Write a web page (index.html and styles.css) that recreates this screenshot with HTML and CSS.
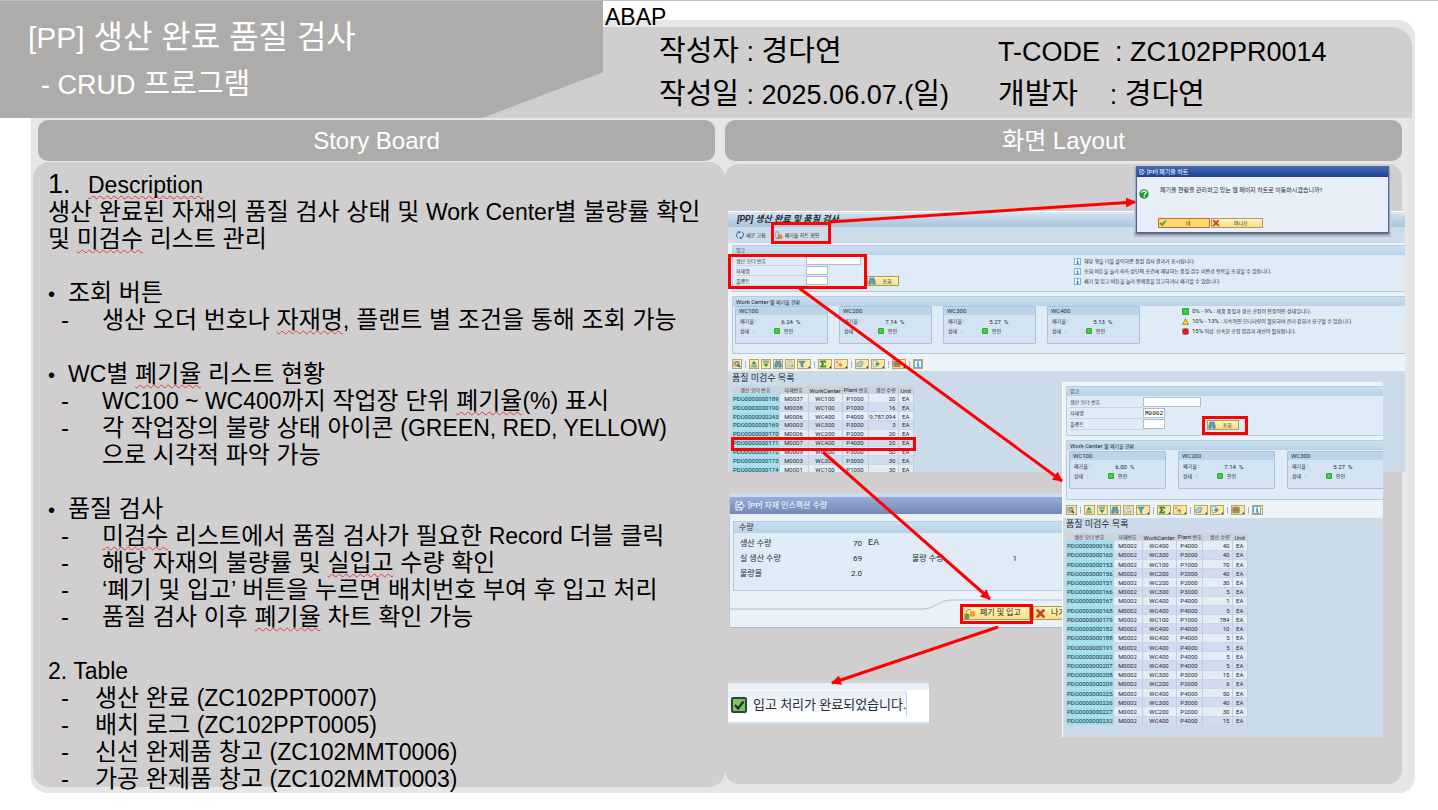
FILE: index.html
```html
<!DOCTYPE html>
<html lang="ko">
<head>
<meta charset="utf-8">
<title>[PP] 생산 완료 품질 검사</title>
<link rel="stylesheet" href="styles.css">
</head>
<body>
<svg class="sprite" aria-hidden="true">
  <symbol id="i-detail" viewBox="0 0 10 10"><path d="M1 2h7v6H1z" fill="#fff" stroke="#777" stroke-width=".7"/><circle cx="4.5" cy="4.5" r="2.3" fill="#b9dba8" stroke="#444" stroke-width=".9"/><path d="M6 6l3 3" stroke="#333" stroke-width="1.3"/></symbol>
  <symbol id="i-asc" viewBox="0 0 10 10"><path d="M5 1l3 4H2z" fill="#3c9a3c"/><path d="M1.5 6h7v1h-7zM1 8h8v1H1z" fill="#2f6f8f"/></symbol>
  <symbol id="i-desc" viewBox="0 0 10 10"><path d="M1 1h8v1H1zM1.500 3h7v1h-7z" fill="#2f6f8f"/><path d="M5 9L2 5h6z" fill="#3c9a3c"/></symbol>
  <symbol id="i-find" viewBox="0 0 10 10"><path d="M2.500 1h1.500l.5 2h1L6 1h1.500L9 6v3H6V6H4v3H1V6z" fill="#5aa0d0" stroke="#28608e" stroke-width=".6"/></symbol>
  <symbol id="i-findn" viewBox="0 0 10 10"><path d="M2.500 1h1.500l.5 2h1L6 1h1.500L8 6v3H5.500V6H4v3H1V6z" fill="#dfe3d5" stroke="#9aa69c" stroke-width=".6"/><path d="M6 7h3M8 5.500L9.500 7 8 8.500" stroke="#999" fill="none" stroke-width=".8"/></symbol>
  <symbol id="i-filter" viewBox="0 0 10 10"><path d="M1 1.500h8L6 5v4L4 8V5z" fill="#5d9fd2" stroke="#2c6496" stroke-width=".7"/></symbol>
  <symbol id="i-sum" viewBox="0 0 10 10"><path d="M1.500 1h7v2.500H7.500L7 2.500H4.500L6.500 5 4.500 7.500H7l.5-1h1V9h-7V8L4 5 1.500 2z" fill="#3d9440" stroke="#266b2b" stroke-width=".4"/></symbol>
  <symbol id="i-sub" viewBox="0 0 10 10"><path d="M1 1h3.500v3.500H1zM5.500 5.500H9V9H5.500z" fill="#e9a27d"/><path d="M2 9l6-7M5 5h3v1H5z" stroke="#d8875f" stroke-width=".8"/></symbol>
  <symbol id="i-print" viewBox="0 0 10 10"><path d="M1 4h6v4H1z" fill="#cfe0ee" stroke="#4777a0" stroke-width=".7"/><circle cx="6" cy="4" r="2.600" fill="#e6f1fa" stroke="#3c77a8" stroke-width=".8"/><path d="M6 2.500V4h1.500" stroke="#36648c" fill="none" stroke-width=".7"/></symbol>
  <symbol id="i-export" viewBox="0 0 10 10"><path d="M1.500 1H6v7H1.500z" fill="#fff" stroke="#4777a0" stroke-width=".7"/><path d="M4 4h3V2.500L9.500 5 7 7.500V6H4z" fill="#58a755" stroke="#2d7440" stroke-width=".4"/></symbol>
  <symbol id="i-grid" viewBox="0 0 10 10"><path d="M1 1.500h8v7H1z" fill="#e9b45e" stroke="#555" stroke-width=".7"/><path d="M1 4h8M1 6h8M3.700 1.500v7M6.400 1.500v7" stroke="#555" stroke-width=".7"/></symbol>
  <symbol id="i-info" viewBox="0 0 10 10"><path d="M.5.5h9v9h-9z" fill="#fff" stroke="#2c8bc4"/><path d="M4.200 1.800h1.800v1.500H4.200zM3.500 4.200H6v3h1v1H3.500v-1h.8v-2h-.8z" fill="#1580c2"/></symbol>
  <symbol id="i-exit" viewBox="0 0 10 10"><path d="M7 3V1H1v8h6V7M3 3.500h3V2l3.500 3L6 8V6.500H3z" fill="none" stroke="#fff" stroke-width=".9"/></symbol>
  <symbol id="i-refresh" viewBox="0 0 10 10"><path d="M5 1H3L.8 4v3L3 9M5 9h2l2.200-3V3L7 1" fill="none" stroke="#32639a" stroke-width="1.200"/><path d="M3 0l3 1.500L3.500 3zM7 10L4 8.500 6.500 7z" fill="#32639a"/></symbol>
  <symbol id="i-chart" viewBox="0 0 10 10"><path d="M1 1h3v8H1z" fill="#d6ebfa" stroke="#3585be" stroke-width=".8"/><path d="M4 5l3-1v5H4z" fill="#4aa34a"/><circle cx="7" cy="6.500" r="2.500" fill="#ef8a2c"/><path d="M2 9h7" stroke="#b33" stroke-width=".8"/></symbol>
  <symbol id="i-move" viewBox="0 0 10 10"><path d="M.8 5.500h3.500v4H.8z" fill="#58a932" stroke="#3a7420" stroke-width=".5"/><path d="M6 3.500h3.300v3.800H6z" fill="#ffb13c" stroke="#e36b12" stroke-width=".7"/><path d="M2 4.500C2 2 4 .8 6 1.800" fill="none" stroke="#555" stroke-width=".7"/></symbol>
  <symbol id="i-no" viewBox="0 0 10 10"><path d="M1 2l1.500-1L5 3.500 7.500 1 9 2 6.500 5 9 8 7.500 9 5 6.500 2.500 9 1 8l2.500-3z" fill="#d9401c" stroke="#a02810" stroke-width=".4"/></symbol>
  <symbol id="i-yes" viewBox="0 0 10 10"><path d="M1 5.500l1.500-1L4 6.200 8 1.500l1 .8L4.200 9z" fill="#4ba32c" stroke="#2f7a1b" stroke-width=".4"/></symbol>
  <symbol id="i-green" viewBox="0 0 10 10"><path d="M1 1h8v8H1z" fill="#1ded1d" stroke="#4d7a4d" stroke-width="1.500"/></symbol>
  <symbol id="i-yellow" viewBox="0 0 10 10"><path d="M5 1l4.300 8H.7z" fill="#ffee00" stroke="#776a22" stroke-width="1"/></symbol>
  <symbol id="i-red" viewBox="0 0 10 10"><path d="M0 0h10v10H0z" fill="#a9b3bb"/><circle cx="5" cy="5" r="4" fill="#ff1010" stroke="#7a2222" stroke-width=".7"/></symbol>
</svg>

<main class="slide">
  <header class="head">
    <div class="banner">
      <h1><span class="en">[PP]</span> 생산 완료 품질 검사</h1>
      <p class="subtitle"><span class="en">- CRUD</span> 프로그램</p>
    </div>
    <p class="tag">ABAP</p>
    <div class="info">
      <p>작성자<span class="en"> : </span>경다연</p>
      <p><span class="en">T-CODE  : ZC102PPR0014</span></p>
      <p>작성일<span class="en"> : 2025.06.07.(</span>일<span class="en">)</span></p>
      <p>개발자   <span class="en"> : </span>경다연</p>
    </div>
  </header>

  <div class="columns">
    <h2 class="bar bar-left">Story Board</h2>
    <h2 class="bar">화면 Layout</h2>

    <section class="story">
      <div class="story-text">
        <h3 class="numbered"><span class="num">1.</span><span class="typo">Description</span></h3>
        <p>생산 완료된 자재의 품질 검사 상태 및 <span class="en">Work Center</span>별 불량률 확인<br>및 <span class="typo">미검수</span> 리스트 관리</p>

        <h4>조회 버튼</h4>
        <ul>
          <li>생산 오더 번호나 <span class="typo">자재명</span>, 플랜트 별 조건을 통해 조회 가능</li>
        </ul>

        <h4><span class="en">WC</span>별 <span class="typo">폐기율</span> 리스트 현황</h4>
        <ul>
          <li><span class="en">WC100 ~ WC400</span>까지 작업장 단위 <span class="typo">폐기율</span><span class="en">(%)</span> 표시</li>
          <li>각 작업장의 불량 상태 아이콘 <span class="en">(GREEN, RED, YELLOW)</span><br>으로 시각적 파악 가능</li>
        </ul>

        <h4>품질 검사</h4>
        <ul>
          <li><span class="typo">미검수</span> 리스트에서 품질 검사가 필요한 <span class="en">Record</span> 더블 클릭</li>
          <li>해당 자재의 불량률 및 <span class="typo">실입고</span> 수량 확인</li>
          <li>‘폐기 및 입고’ 버튼을 누르면 배치번호 부여 후 입고 처리</li>
          <li>품질 검사 이후 <span class="typo">폐기율</span> 차트 확인 가능</li>
        </ul>

        <h3><span class="en">2. Table</span></h3>
        <ul class="tables">
          <li>생산 완료 <span class="en">(ZC102PPT0007)</span></li>
          <li>배치 로그 <span class="en">(ZC102PPT0005)</span></li>
          <li>신선 완제품 창고 <span class="en">(ZC102MMT0006)</span></li>
          <li>가공 완제품 창고 <span class="en">(ZC102MMT0003)</span></li>
        </ul>
      </div>
    </section>

    <section class="board">
      <article class="win win-main">
        <h3 class="win-title">[PP] 생산 완료 및 품질 검사</h3>
        <div class="app-bar">
          <button type="button"><svg><use href="#i-refresh"/></svg>새로 고침</button>
          <button type="button"><svg><use href="#i-chart"/></svg>폐기율 차트 확인</button>
        </div>
        <div class="group">
          <h4>입고</h4>
          <div class="search">
            <form class="fields">
              <label for="a1">생산 오더 번호</label><input id="a1" class="long">
              <label for="a2">자재명</label><input id="a2">
              <label for="a3">플랜트</label><input id="a3">
            </form>
            <button type="button" class="sap-btn query"><svg><use href="#i-find"/></svg><span>조회</span></button>
            <ul class="notes">
              <li><svg><use href="#i-info"/></svg>해당 행을 더블 클릭하면 품질 검사 결과가 표시됩니다.</li>
              <li><svg><use href="#i-info"/></svg>조회 버튼을 눌러 좌측 상단의 조건에 해당하는 품질 검수 미완료 항목을 조회할 수 있습니다.</li>
              <li><svg><use href="#i-info"/></svg>폐기 및 입고 버튼을 눌러 완제품을 입고하거나 폐기할 수 있습니다.</li>
            </ul>
          </div>
        </div>
        <div class="group">
          <h4><span class="lat">Work Center</span> 별 폐기율 현황</h4>
          <div class="cards">
            <div class="card"><h5>WC100</h5><p><span>폐기율 :</span><b>6.24</b><i>%</i></p><p><span>상태 &nbsp; :</span><svg><use href="#i-green"/></svg>안전</p></div>
            <div class="card"><h5>WC200</h5><p><span>폐기율 :</span><b>7.14</b><i>%</i></p><p><span>상태 &nbsp; :</span><svg><use href="#i-green"/></svg>안전</p></div>
            <div class="card"><h5>WC300</h5><p><span>폐기율 :</span><b>5.27</b><i>%</i></p><p><span>상태 &nbsp; :</span><svg><use href="#i-green"/></svg>안전</p></div>
            <div class="card"><h5>WC400</h5><p><span>폐기율 :</span><b>5.13</b><i>%</i></p><p><span>상태 &nbsp; :</span><svg><use href="#i-green"/></svg>안전</p></div>
            <ul class="notes legend">
              <li><svg><use href="#i-green"/></svg><span><span class="lat">0% - 9% :</span> 제품 품질과 생산 공정이 안정적인 상태입니다.</span></li>
              <li><svg><use href="#i-yellow"/></svg><span><span class="lat">10% - 13% :</span> 지속적인 모니터링이 필요하며 관리 강화가 요구될 수 있습니다.</span></li>
              <li><svg><use href="#i-red"/></svg><span><span class="lat">15%</span> 이상: 신속한 공정 점검과 개선이 필요합니다.</span></li>
            </ul>
          </div>
        </div>
        <div class="tools">
          <button type="button" aria-label="상세"><svg><use href="#i-detail"/></svg></button><hr>
          <button type="button" aria-label="오름차순"><svg><use href="#i-asc"/></svg></button>
          <button type="button" aria-label="내림차순"><svg><use href="#i-desc"/></svg></button>
          <button type="button" aria-label="찾기"><svg><use href="#i-find"/></svg></button>
          <button type="button" aria-label="다음 찾기"><svg><use href="#i-findn"/></svg></button>
          <button type="button" class="drop" aria-label="필터"><svg><use href="#i-filter"/></svg></button><hr>
          <button type="button" class="drop" aria-label="합계"><svg><use href="#i-sum"/></svg></button>
          <button type="button" class="drop" aria-label="소계"><svg><use href="#i-sub"/></svg></button><hr>
          <button type="button" class="drop" aria-label="인쇄"><svg><use href="#i-print"/></svg></button>
          <button type="button" class="drop" aria-label="내보내기"><svg><use href="#i-export"/></svg></button><hr>
          <button type="button" class="drop" aria-label="레이아웃"><svg><use href="#i-grid"/></svg></button><hr>
          <button type="button" aria-label="정보"><svg><use href="#i-info"/></svg></button>
        </div>
        <h4 class="list-title">품질 미검수 목록</h4>
        <table>
          <thead><tr><th>생산 오더 번호</th><th>자재번호</th><th class="lat">WorkCenter</th><th><span class="lat">Plant</span> 번호</th><th>생산 수량</th><th class="lat">Unit</th></tr></thead>
          <tbody>
            <tr><td>PDO0000000189</td><td>M0037</td><td>WC100</td><td>P1000</td><td>20</td><td>EA</td></tr>
            <tr><td>PDO0000000190</td><td>M0038</td><td>WC100</td><td>P1000</td><td>16</td><td>EA</td></tr>
            <tr><td>PDO0000000243</td><td>M0006</td><td>WC400</td><td>P4000</td><td>9,787,094</td><td>EA</td></tr>
            <tr><td>PDO0000000169</td><td>M0003</td><td>WC300</td><td>P3000</td><td>3</td><td>EA</td></tr>
            <tr><td>PDO0000000170</td><td>M0006</td><td>WC200</td><td>P2000</td><td>20</td><td>EA</td></tr>
            <tr><td>PDO0000000171</td><td>M0007</td><td>WC400</td><td>P4000</td><td>20</td><td>EA</td></tr>
            <tr><td>PDO0000000172</td><td>M0009</td><td>WC300</td><td>P3000</td><td>50</td><td>EA</td></tr>
            <tr><td>PDO0000000173</td><td>M0003</td><td>WC300</td><td>P3000</td><td>30</td><td>EA</td></tr>
            <tr><td>PDO0000000174</td><td>M0001</td><td>WC100</td><td>P1000</td><td>30</td><td>EA</td></tr>
          </tbody>
        </table>
      </article>

      <article class="popup-area">
        <div class="popup">
          <h3><svg><use href="#i-exit"/></svg>[PP] 폐기율 차트</h3>
          <div class="question">
            <svg viewBox="0 0 10 10"><circle cx="5" cy="5" r="4.700" fill="#1f9a2e"/><path d="M3 3.800C3 1.500 7 1.500 7 3.800 7 5 5.200 5 5.200 6.200" fill="none" stroke="#fff" stroke-width="1.400"/><circle cx="5.200" cy="7.800" r=".8" fill="#fff"/></svg>
            <p>폐기율 현황을 관리하고 있는 웹 페이지 차트로 이동하시겠습니까?</p>
          </div>
          <div class="answers">
            <button type="button" class="sap-btn chosen"><svg><use href="#i-yes"/></svg><span>네</span></button>
            <button type="button" class="sap-btn"><svg><use href="#i-no"/></svg><span>아니오</span></button>
          </div>
        </div>
      </article>

      <article class="dialog">
        <h3><svg><use href="#i-exit"/></svg>[PP] 자재 인스펙션 수량</h3>
        <div class="dialog-body">
          <div class="group">
            <h4>수량</h4>
            <dl>
              <dt>생산 수량</dt><dd>70</dd><dd class="unit">EA</dd><dd></dd>
              <dt>실 생산 수량</dt><dd>69</dd><dt class="second">불량 수량</dt><dd>1</dd>
              <dt>불량율</dt><dd>2.0</dd><dd></dd><dd></dd>
            </dl>
          </div>
          <div class="dialog-foot">
            <svg class="curve" viewBox="0 0 332 28"><path d="M0 13H193C205 13 208 4 222 4H332" fill="none" stroke="#aebfd2"/></svg>
            <button type="button" class="sap-btn receive"><svg><use href="#i-move"/></svg>폐기 및 입고</button>
            <button type="button" class="sap-btn"><svg><use href="#i-no"/></svg>나가</button>
          </div>
        </div>
      </article>

      <article class="message">
        <p><svg viewBox="0 0 16 16"><rect x="1" y="1" width="14" height="14" rx="1" fill="#7cc653" stroke="#333f4c" stroke-width="2"/><path d="M4 8l3 3.500L12.500 4.500" fill="none" stroke="#222c33" stroke-width="2.200"/></svg>입고 처리가 완료되었습니다.</p>
      </article>

      <article class="win win-result">
        <div class="group">
          <h4>입고</h4>
          <div class="search">
            <form class="fields">
              <label for="b1">생산 오더 번호</label><input id="b1" class="long">
              <label for="b2">자재명</label><input id="b2" value="M0002">
              <label for="b3">플랜트</label><input id="b3">
            </form>
            <button type="button" class="sap-btn query"><svg><use href="#i-find"/></svg><span>조회</span></button>
          </div>
        </div>
        <div class="group">
          <h4><span class="lat">Work Center</span> 별 폐기율 현황</h4>
          <div class="cards">
            <div class="card"><h5>WC100</h5><p><span>폐기율 :</span><b>6.00</b><i>%</i></p><p><span>상태 &nbsp; :</span><svg><use href="#i-green"/></svg>안전</p></div>
            <div class="card"><h5>WC200</h5><p><span>폐기율 :</span><b>7.14</b><i>%</i></p><p><span>상태 &nbsp; :</span><svg><use href="#i-green"/></svg>안전</p></div>
            <div class="card"><h5>WC300</h5><p><span>폐기율 :</span><b>5.27</b><i>%</i></p><p><span>상태 &nbsp; :</span><svg><use href="#i-green"/></svg>안전</p></div>
          </div>
        </div>
        <div class="tools">
          <button type="button" aria-label="상세"><svg><use href="#i-detail"/></svg></button><hr>
          <button type="button" aria-label="오름차순"><svg><use href="#i-asc"/></svg></button>
          <button type="button" aria-label="내림차순"><svg><use href="#i-desc"/></svg></button>
          <button type="button" aria-label="찾기"><svg><use href="#i-find"/></svg></button>
          <button type="button" aria-label="다음 찾기"><svg><use href="#i-findn"/></svg></button>
          <button type="button" class="drop" aria-label="필터"><svg><use href="#i-filter"/></svg></button><hr>
          <button type="button" class="drop" aria-label="합계"><svg><use href="#i-sum"/></svg></button>
          <button type="button" class="drop" aria-label="소계"><svg><use href="#i-sub"/></svg></button><hr>
          <button type="button" class="drop" aria-label="인쇄"><svg><use href="#i-print"/></svg></button>
          <button type="button" class="drop" aria-label="내보내기"><svg><use href="#i-export"/></svg></button><hr>
          <button type="button" class="drop" aria-label="레이아웃"><svg><use href="#i-grid"/></svg></button><hr>
          <button type="button" aria-label="정보"><svg><use href="#i-info"/></svg></button>
        </div>
        <h4 class="list-title">품질 미검수 목록</h4>
        <table>
          <thead><tr><th>생산 오더 번호</th><th>자재번호</th><th class="lat">WorkCenter</th><th><span class="lat">Plant</span> 번호</th><th>생산 수량</th><th class="lat">Unit</th></tr></thead>
          <tbody>
            <tr><td>PDO0000000163</td><td>M0002</td><td>WC400</td><td>P4000</td><td>40</td><td>EA</td></tr>
            <tr><td>PDO0000000160</td><td>M0002</td><td>WC300</td><td>P3000</td><td>40</td><td>EA</td></tr>
            <tr><td>PDO0000000153</td><td>M0002</td><td>WC100</td><td>P1000</td><td>70</td><td>EA</td></tr>
            <tr><td>PDO0000000156</td><td>M0002</td><td>WC200</td><td>P2000</td><td>40</td><td>EA</td></tr>
            <tr><td>PDO0000000151</td><td>M0002</td><td>WC200</td><td>P2000</td><td>30</td><td>EA</td></tr>
            <tr><td>PDO0000000166</td><td>M0002</td><td>WC300</td><td>P3000</td><td>5</td><td>EA</td></tr>
            <tr><td>PDO0000000167</td><td>M0002</td><td>WC400</td><td>P4000</td><td>1</td><td>EA</td></tr>
            <tr><td>PDO0000000168</td><td>M0002</td><td>WC400</td><td>P4000</td><td>5</td><td>EA</td></tr>
            <tr><td>PDO0000000179</td><td>M0002</td><td>WC100</td><td>P1000</td><td>784</td><td>EA</td></tr>
            <tr><td>PDO0000000182</td><td>M0002</td><td>WC400</td><td>P4000</td><td>10</td><td>EA</td></tr>
            <tr><td>PDO0000000188</td><td>M0002</td><td>WC400</td><td>P4000</td><td>5</td><td>EA</td></tr>
            <tr><td>PDO0000000191</td><td>M0002</td><td>WC400</td><td>P4000</td><td>5</td><td>EA</td></tr>
            <tr><td>PDO0000000202</td><td>M0002</td><td>WC400</td><td>P4000</td><td>5</td><td>EA</td></tr>
            <tr><td>PDO0000000207</td><td>M0002</td><td>WC400</td><td>P4000</td><td>5</td><td>EA</td></tr>
            <tr><td>PDO0000000208</td><td>M0002</td><td>WC300</td><td>P3000</td><td>15</td><td>EA</td></tr>
            <tr><td>PDO0000000209</td><td>M0002</td><td>WC200</td><td>P2000</td><td>6</td><td>EA</td></tr>
            <tr><td>PDO0000000225</td><td>M0002</td><td>WC400</td><td>P4000</td><td>50</td><td>EA</td></tr>
            <tr><td>PDO0000000226</td><td>M0002</td><td>WC300</td><td>P3000</td><td>40</td><td>EA</td></tr>
            <tr><td>PDO0000000227</td><td>M0002</td><td>WC200</td><td>P2000</td><td>30</td><td>EA</td></tr>
            <tr><td>PDO0000000232</td><td>M0002</td><td>WC400</td><td>P4000</td><td>15</td><td>EA</td></tr>
          </tbody>
        </table>
      </article>

      <!-- callout boxes and arrows between the screens -->
      <svg class="callouts" viewBox="0 0 680 620" aria-hidden="true">
        <defs><marker id="tip" viewBox="0 0 10 10" refX="9" refY="5" markerWidth="10" markerHeight="10" markerUnits="userSpaceOnUse" orient="auto"><path d="M0 0l10 5L0 10z" fill="#f00"/></marker></defs>
        <g fill="none" stroke="#f00" stroke-width="3">
          <path d="M47.500 59.500h57v19h-57zM4.500 91.500h136v32H4.500zM7.500 274.500h182v11H7.500zM478.500 253.500h43v16h-43zM236.500 441.500h70v17h-70z"/>
          <path d="M104 58L410 38" marker-end="url(#tip)"/>
          <path d="M74 124L337 317" marker-end="url(#tip)"/>
          <path d="M98 288L265 435" marker-end="url(#tip)"/>
          <path d="M273 463L107 519" marker-end="url(#tip)"/>
        </g>
      </svg>
    </section>
  </div>
</main>
</body>
</html>
```
FILE: styles.css
```css
* { box-sizing: border-box; }
body, h1, h2, h3, h4, h5, p, ul, dl, dd, dt { margin: 0; padding: 0; font-weight: 400; }
ul { list-style: none; }
body {
  background: #fff;
  color: #000;
  font-family: "Liberation Sans", "Noto Sans CJK KR", sans-serif;
}
.sprite { display: none; }
button { font: inherit; color: inherit; padding: 0; margin: 0; }
svg { display: block; flex: none; }

.slide { position: relative; border-top: 1px solid #bfbfbf; padding-bottom: 6px; }
.slide::before {
  content: "";
  position: absolute;
  z-index: -1;
  inset: 19px 23px 0 31px;
  border-radius: 16px;
  background: #e6e6e6;
}

/* header */
.head { display: grid; grid-template-columns: 603fr 835fr; height: 117px; }
.banner {
  grid-area: 1 / 1;
  z-index: 1;
  background: #adacaa;
  color: #fff;
  clip-path: polygon(0 0, 100% 0, 100% 61%, 80% 100%, 0 100%);
  padding: 12px 0 0 28px;
}
.banner h1 { font-size: 32px; line-height: 48px; }
.banner h1 .en { font-size: 30px; }
.subtitle { font-size: 29px; line-height: 46px; padding-left: 13px; }
.subtitle .en { font-size: 27px; }
.tag { grid-area: 1 / 2; z-index: 1; font-size: 23px; line-height: 32px; padding-left: 2px; }
.info {
  grid-area: 1 / 1 / 2 / 3;
  margin: 26px 26px 0 484px;
  padding: 3px 0 0 175px;
  border-radius: 0 20px 0 0;
  background: #d0cecf;
  display: grid;
  grid-template-columns: 339px 1fr;
  grid-auto-rows: 43px;
  align-content: start;
  font-size: 29px;
  line-height: 43px;
  white-space: pre;
}
.info .en { font-size: 27px; line-height: 1; }
.en { line-height: 1; }

/* two columns */
.columns {
  display: grid;
  grid-template-columns: 692fr 677fr;
  margin: 2px 36px 0 33px;
}
.bar {
  height: 41px;
  margin-bottom: 1px;
  border-radius: 10px;
  background: #adacaa;
  color: #fff;
  font-size: 24px;
  line-height: 41px;
  text-align: center;
}
.bar-left { margin: 0 10px 1px 5px; }

.story { display: flex; flex-direction: column; background: #d0cecf; border-radius: 16px; padding: 9px 0 0 15px; }
.story-text { font-size: 24px; line-height: 27px; margin-bottom: -5px; white-space: nowrap; }
.story-text h3, .story-text h4 { font-size: 24px; }
.story-text .en, .numbered .typo { font-size: 23px; }
.story-text .numbered { display: flex; align-items: baseline; height: 27px; }
.num { font-size: 27px; width: 40px; }
.story-text h4, .story-text ul + h3 { margin-top: 27px; }
.story-text h4 { display: flex; white-space: pre; align-items: baseline; }
.story-text h4::before { content: "•"; width: 20px; line-height: 1; font-size: 20px; }
.story-text li { padding-left: 54px; }
.story-text li::before { content: "-"; float: left; margin-left: -41px; }
.story-text .tables li { padding-left: 47px; }
.story-text .tables li::before { margin-left: -34px; }
.typo {
  text-decoration: underline wavy #e03c3c 1px;
  text-underline-offset: 2px;
  text-decoration-skip-ink: none;
}

/* board with the captured screens */
.board {
  position: relative;
  margin: 2px 0 3px;
  border-radius: 14px;
  background: #d0cecf;
  font-family: Roboto, "Noto Sans CJK KR", sans-serif;
  font-size: 5px;
  line-height: 10px;
  color: #222b35;
  white-space: nowrap;
}
.board article { position: absolute; overflow: hidden; }
.board .lat { font-size: 6px; }
.callouts { position: absolute; left: 0; top: 0; width: 680px; height: 620px; overflow: visible; }

.win { background: linear-gradient(#ecf3f9 0 159px, #cbdbe9 159px); }
.win-main { left: 3px; top: 47px; width: 677px; height: 261px; padding-left: 4px; border-top: 1px solid #fff; }
.win-title {
  margin-left: -4px;
  padding-left: 9px;
  font-size: 9px;
  line-height: 15px;
  font-weight: 700;
  font-style: italic;
  background: linear-gradient(#dbe8f3, #c0d5e6 40%, #a9c5dc);
}
.app-bar {
  display: flex;
  gap: 9px;
  height: 16px;
  margin: 0 0 2px -4px;
  padding-left: 8px;
  background: #cddce8;
}
.app-bar button { display: flex; align-items: center; gap: 2px; border: 0; background: none; }
.app-bar svg { width: 8px; height: 8px; }

.group { background: #dfebf5; border: 1px solid #b5cde2; border-width: 1px 0 1px 1px; margin-bottom: 4px; }
.group h4 { height: 9px; line-height: 9px; padding-left: 3px; background: linear-gradient(#cbdff0, #b9d1e7); font-size: 5px; }
.win-main .group { border-radius: 2px 0 0 0; }
.search { display: grid; grid-template-columns: 131px 206px 1fr; align-items: end; padding: 1px 0 5px 3px; }
.fields { display: grid; grid-template-columns: 70px 1fr; grid-auto-rows: 10px; }
.fields label { border-bottom: 1px solid #c5d3df; }
.fields input {
  width: 22px;
  height: 9px;
  border: 1px solid #aebccb;
  background: #fff;
  padding: 0 0 0 1px;
  font: 6px "Liberation Mono", monospace;
}
.fields .long { width: 55px; }
.sap-btn {
  display: flex;
  flex: none;
  align-items: center;
  border: 1px solid #a99b62;
  background: linear-gradient(#fff4b8, #f9df85);
  height: 10px;
}
.sap-btn svg { width: 8px; height: 8px; }
.sap-btn span { flex: 1; text-align: center; }
.query { width: 32px; }
.notes li { display: flex; align-items: center; height: 10px; gap: 3px; padding-left: 1px; }
.notes svg { width: 7px; height: 7px; }

.cards { display: flex; gap: 11px; padding: 0 0 9px 2px; }
.card { flex: none; width: 93px; height: 38px; border: 1px solid #a9c5dd; background: #d3e3f1; border-radius: 1px; }
.card h5 { font-size: 6px; line-height: 8px; padding-left: 3px; background: #bdd4e8; margin-bottom: 1px; }
.card p { display: flex; align-items: center; height: 10px; padding-left: 4px; }
.card span { width: 34px; }
.card b, .card i { font: 6px Roboto, sans-serif; }
.card b { width: 19px; text-align: right; margin-right: 3px; }
.card svg { width: 6px; height: 6px; margin-right: 4px; }
.legend { margin-left: 30px; }

.tools { display: flex; gap: 2px; align-items: center; height: 12px; }
.tools hr { width: 1px; height: 7px; margin: 0 1px; border: 0; background: #a8b7c5; }
.tools button { position: relative; width: 10px; height: 10px; border: 1px solid #b6a667; background: #fbeaa0; }
.tools svg { width: 8px; height: 8px; }
.tools .drop { width: 14px; }
.tools .drop::after {
  content: "";
  position: absolute;
  right: 0;
  bottom: 0;
  border: 1px solid #333;
  border-color: transparent #333 #333 transparent;
}
.list-title { font-size: 9px; line-height: 16px; }

.board table { table-layout: fixed; width: 182px; border-collapse: collapse; font-size: 6px; line-height: 7px; }
.board th, .board td { padding: 0 1px; text-align: center; border-right: 1px solid #c0cedd; font-weight: 400; }
.board th { background: #ccd3da; font-size: 5px; height: 8px; }
.board td { height: 8px; border-bottom: 1px solid #c9d6e4; }
.board tbody tr { background: #e2edf6; }
.board tbody tr:nth-child(even) { background: #d2dcee; }
.board tbody td:first-child { background: #9fe0ee; }
.win-main table { height: 88px; }
th:nth-child(1) { width: 47px; }
th:nth-child(2) { width: 29px; }
th:nth-child(3) { width: 34px; }
th:nth-child(4) { width: 26px; }
th:nth-child(5) { width: 30px; }
.board td:nth-child(5), .board th:nth-child(5) { text-align: right; padding-right: 2px; }

/* filtered result */
.win-result { left: 337px; top: 218px; width: 321px; height: 355px; padding: 4px 0 0 3px; border-left: 1px solid #fff; background: linear-gradient(#ecf3f9 0 136px, #cbdbe9 136px); }
.win-result .search { grid-template-columns: 137px 1fr; }
.win-result .fields { grid-template-columns: 73px 1fr; grid-auto-rows: 11px; }
.win-result .fields .long { width: 58px; }
.win-result .fields input { height: 10px; }
.win-result .cards { gap: 12px; padding: 1px 0 10px 2px; }
.win-result .card { width: 97px; }
.win-result .tools button { width: 11px; }
.win-result .tools .drop { width: 14px; }
.win-result .list-title { line-height: 17px; }
.win-result table { height: 193px; }

/* confirmation popup */
.popup-area { left: 409px; top: 2px; width: 257px; height: 71px; padding: 0 2px 4px; background: linear-gradient(#d0cecf 0 12px, #c9dae8 12px 66px, #b9bfc8 66px); }
.popup { height: 67px; border: 1px solid #4f6592; background: #e8eff8; box-shadow: 0 1px 2px #3d4c66; }
.popup h3 { display: flex; align-items: center; gap: 2px; height: 10px; padding-left: 2px; color: #fff; font-size: 6px; background: linear-gradient(#4368b8, #1f3f8c); }
.popup h3 svg { width: 6px; height: 6px; }
.question { display: flex; gap: 11px; padding: 8px 0 0 2px; font-size: 6px; height: 41px; }
.question svg { width: 10px; height: 10px; margin-top: 4px; }
.answers { display: flex; gap: 1px; padding-left: 21px; }
.answers .sap-btn { width: 52px; }
.answers .chosen { background: #fbd96b; border-color: #e0602c; }

/* inspection dialog */
.dialog { left: 4px; top: 329px; width: 337px; height: 135px; border-top: 4px solid #cddcea; border-left: 1px solid #b7c9df; border-bottom: 1px solid #a9b9d2; font-size: 8px; }
.dialog h3 { display: flex; align-items: center; gap: 3px; height: 17px; padding-left: 5px; font-size: 8px; color: #fff; background: linear-gradient(#98addd, #7486b4); }
.dialog h3 svg { width: 10px; height: 10px; }
.dialog-body { background: #e9f1f9; padding: 7px 0 0 3px; }
.dialog .group { margin: 0; height: 70px; }
.dialog .group h4 { font-size: 8px; height: 11px; line-height: 11px; padding-left: 5px; }
.dialog dl { display: grid; grid-template-columns: 80px 48px 72px 83px; grid-auto-rows: 15px; line-height: 15px; padding: 3px 0 0 6px; }
.dialog dd { text-align: right; padding-right: 6px; }
.dialog dd.unit { text-align: left; font: 9px/15px "Liberation Mono", monospace; }
.dialog .second { padding-left: 44px; }
.dialog-foot { position: relative; display: flex; gap: 3px; height: 36px; margin-left: -3px; padding: 15px 0 0 232px; }
.curve { position: absolute; left: 0; top: 5px; width: 332px; height: 28px; }
.dialog-foot .sap-btn { position: relative; height: 14px; padding: 0 4px 0 1px; gap: 5px; }
.dialog-foot .sap-btn svg { width: 11px; height: 11px; }
.dialog-foot .receive { width: 68px; }

/* status message */
.message { left: 3px; top: 519px; width: 201px; height: 41px; background: #fff; border-top: 7px solid #e9eff6; border-bottom: 2px solid #cfdfec; }
.message p { display: flex; align-items: center; gap: 6px; width: 179px; height: 25px; margin-top: 1px; padding: 3px 0 0 3px; font-size: 13px; border-right: 1px solid #c4d2df; border-radius: 0 3px 0 0; background: linear-gradient(#e5edf5, #fff); }
.message svg { width: 16px; height: 16px; }
```
